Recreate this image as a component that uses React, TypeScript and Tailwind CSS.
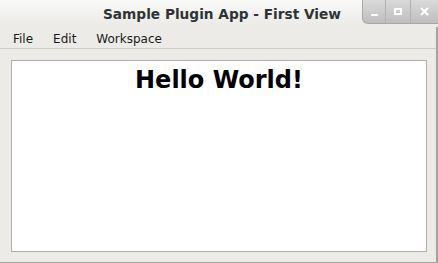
export default function App() {
  return (
    <div
      className="w-[438px] h-[263px] flex flex-col bg-[#edebe8] overflow-hidden"
      style={{ fontFamily: '"DejaVu Sans", sans-serif' }}
    >
      {/* title bar */}
      <div className="h-[27px] flex items-start bg-gradient-to-b from-[#f9f9f8] to-[#eceae7]">
        <div className="flex-1 h-full flex items-center pl-[103px] pt-[1px]">
          <span className="text-[13.7px] font-bold text-[#2e3436] whitespace-nowrap">Sample Plugin App - First View</span>
        </div>
        <div className="flex h-[24px] rounded-bl-[6px] overflow-hidden bg-gradient-to-b from-[#dadada] to-[#bebebe] border-b border-l border-[#a8a8a8]">
          <div className="w-[23px] flex items-end justify-center pb-[7px] border-r border-[#b2b2b2]">
            <div className="w-[7px] h-[2px] bg-white" />
          </div>
          <div className="w-[25px] flex items-center justify-center border-r border-[#b2b2b2]">
            <div className="w-[8px] h-[7px] border-2 border-white" />
          </div>
          <div className="w-[27px] flex items-center justify-center">
            <svg width="9" height="9" viewBox="0 0 9 9">
              <path d="M1 1 L8 8 M8 1 L1 8" stroke="#fff" strokeWidth="2.2" />
            </svg>
          </div>
        </div>
      </div>

      <div className="flex-1 flex flex-col border-r-2 border-b border-[#a5a3a0]">
        {/* menu bar */}
        <div className="h-[22px] flex items-center gap-[20px] px-[13px] pt-[3px] text-[12px] text-[#1a1a1a] border-b border-[#cfccc8]">
          <span>File</span>
          <span>Edit</span>
          <span>Workspace</span>
        </div>

        {/* content */}
        <div className="flex-1 pl-[11px] pr-[9px] pt-[11px] pb-[10px]">
          <div className="h-full bg-white border border-[#b2aea9] flex justify-center">
            <h1 className="text-[24px] font-bold text-black leading-none mt-[7px]">Hello World!</h1>
          </div>
        </div>
      </div>
    </div>
  );
}
